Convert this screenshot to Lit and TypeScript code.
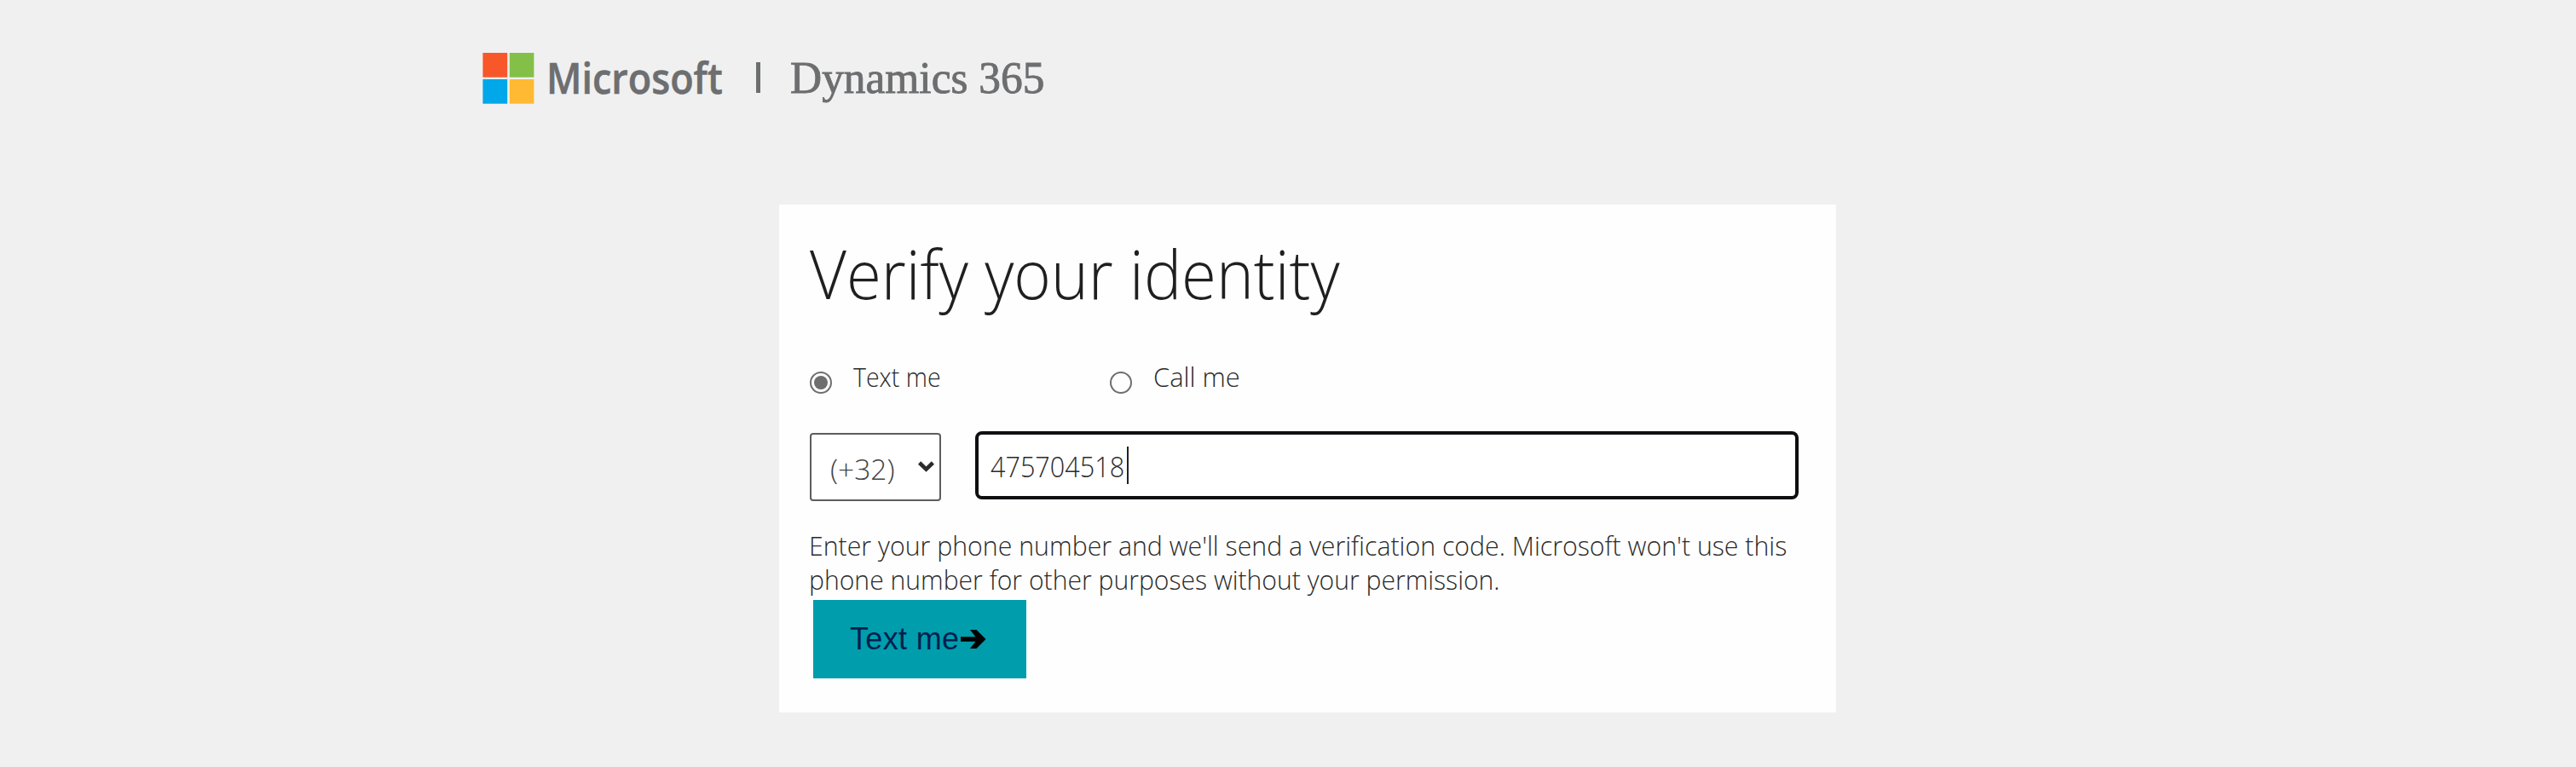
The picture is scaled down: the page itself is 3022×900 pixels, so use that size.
import { LitElement, html, css, svg } from "lit";
import { customElement, state } from "lit/decorators.js";

@customElement("brand-header")
class BrandHeader extends LitElement {
  static styles = css`
    :host { display: flex; align-items: flex-start; height: 178px; padding: 62px 0 0 566px; color: #6d6e70; }
    .tiles { flex: none; display: block; width: 61px; height: 60px; }
    .name { width: 247px; padding-left: 14px; margin-top: -3px; font: 600 50px/64px "Open Sans", sans-serif; box-sizing: border-box; -webkit-text-stroke: 0.6px #6d6e70; }
    .name span, .product span { display: inline-block; white-space: nowrap; transform-origin: left; }
    .name span { transform: scaleX(0.9); }
    .rule { width: 5px; height: 36px; margin: 11px 0 0 13px; background: #6d6e70; }
    .product { margin: -3px 0 0 35px; font: 53px/64px "Liberation Serif", serif; -webkit-text-stroke: 0.9px #6d6e70; }
    .product span { transform: scaleX(0.97); }
  `;
  render() {
    return html`
      <svg class="tiles" viewBox="0 0 61 60">
        <rect x="0.4" width="28.8" height="28.7" fill="#f8572a" />
        <rect x="31.8" width="28.6" height="28.7" fill="#84bf48" />
        <rect x="0.4" y="31" width="28.8" height="28.7" fill="#00a7e9" />
        <rect x="31.8" y="31" width="28.6" height="28.7" fill="#ffb932" />
      </svg>
      <div class="name"><span>Microsoft</span></div>
      <div class="rule"></div>
      <div class="product"><span>Dynamics 365</span></div>
    `;
  }
}

@customElement("contact-option")
class ContactOption extends LitElement {
  static properties = { label: {}, checked: { type: Boolean } };
  declare label: string;
  declare checked: boolean;
  static styles = css`
    :host { display: flex; height: 40px; width: 352px; }
    .dot { flex: none; width: 26px; height: 26px; margin: 14px 25px 0 0; }
    .label { font: 300 31.5px/40px "Open Sans", sans-serif; white-space: nowrap; transform-origin: left; }
    .label.on { transform: scaleX(0.905); }
    .label.off { transform: scaleX(0.98); }
  `;
  render() {
    return html`
      <svg class="dot" viewBox="0 0 26 26">
        <circle cx="13" cy="13" r="12" fill="#fff" stroke="#6f6f6f" stroke-width="2" />
        ${this.checked ? svg`<circle cx="13" cy="13" r="8" fill="#6f6f6f" />` : ""}
      </svg>
      <span class="label ${this.checked ? "on" : "off"}">${this.label}</span>
    `;
  }
}

@customElement("app-root")
class AppRoot extends LitElement {
  @state() phone = "475704518";
  static styles = css`
    :host { display: block; height: 900px; overflow: hidden; background: #f0f0f0; }
    .card { box-sizing: border-box; width: 1240px; height: 596px; margin-left: 914px; padding: 33px 44px 0 36px; background: #fefefe; color: #2b2b2b; font-family: "Open Sans", sans-serif; }
    h1 { margin: 0; font-size: 79px; font-weight: 300; line-height: 96px; color: #1f1f1f; white-space: nowrap; transform-origin: left; transform: scaleX(0.941); }
    .options { display: flex; margin-top: 53px; }
    .fields { display: flex; align-items: flex-start; margin-top: 44px; }
    .code { box-sizing: border-box; display: flex; align-items: center; justify-content: space-between; width: 154px; height: 80px; margin-top: 2px; padding: 3px 6px 0 22px; border: 2px solid #5d5d5d; border-radius: 4px; background: #fff; font-size: 33.5px; font-weight: 300; color: #444; }
    .chev { width: 19px; height: 13px; margin-top: -5px; overflow: visible; }
    .phone { box-sizing: border-box; display: flex; align-items: center; width: 966px; height: 80px; margin-left: 40px; padding: 2px 0 0 14px; border: 4px solid #0f0f11; border-radius: 8px; background: #fff; font-size: 33.5px; font-weight: 350; }
    .digits { width: 158px; white-space: nowrap; transform-origin: left; transform: scaleX(0.913); }
    .caret { width: 2px; height: 44px; margin: -2px 0 0 2px; background: #222; }
    .note { margin: 32px 0 0 -1px; font-size: 31.5px; font-weight: 300; line-height: 40px; }
    .line { display: block; white-space: nowrap; transform-origin: left; transform: scaleX(0.961); width: 1191px; }
    .line.last { transform: scaleX(0.956); }
    .send { display: flex; box-sizing: border-box; align-items: center; width: 250px; height: 92px; margin: 4px 0 0 4px; padding: 0 0 0 43px; border: 0; background: #009dac; color: #001f4e; font: 36px/42px "Liberation Sans", sans-serif; }
    .send span { white-space: nowrap; letter-spacing: 0.35px; }
    .arrow { width: 30px; height: 22px; margin-left: 1px; }
  `;
  render() {
    return html`
      <brand-header></brand-header>
      <main class="card">
        <h1>Verify your identity</h1>
        <div class="options">
          <contact-option label="Text me" checked></contact-option>
          <contact-option label="Call me"></contact-option>
        </div>
        <div class="fields">
          <div class="code">
            <span>(+32)</span>
            <svg class="chev" viewBox="0 0 19 13"><path d="M1.6 2 9.5 9.6 17.4 2" fill="none" stroke="#2b2b2b" stroke-width="4.6" /></svg>
          </div>
          <div class="phone"><span class="digits">${this.phone}</span><i class="caret"></i></div>
        </div>
        <p class="note">
          <span class="line">Enter your phone number and we'll send a verification code. Microsoft won't use this</span>
          <span class="line last">phone number for other purposes without your permission.</span>
        </p>
        <button class="send">
          <span>Text me</span>
          <svg class="arrow" viewBox="0 0 30 22"><path d="M0 8.2H17.5L11 0H18.5L29.5 11 18.5 22H11L17.5 13.8H0Z" fill="#000" /></svg>
        </button>
      </main>
    `;
  }
}
